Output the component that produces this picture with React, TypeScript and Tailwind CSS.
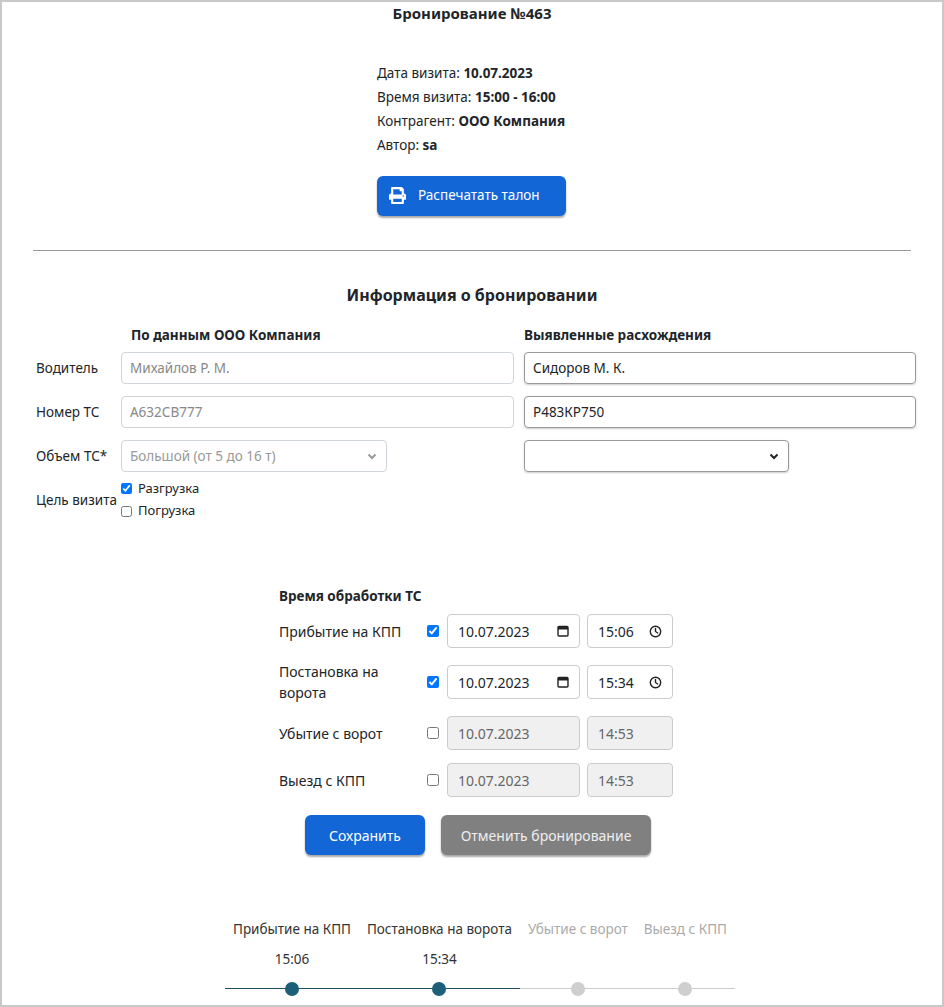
import React from 'react';
import { FaPrint } from 'react-icons/fa';

const CalIcon = () => (
  <svg width="12" height="12" viewBox="0 0 12 12" className="text-[#222]">
    <rect x="1" y="1.5" width="10" height="9.5" rx="1" fill="none" stroke="currentColor" strokeWidth="1.4" />
    <rect x="1" y="1.5" width="10" height="3" fill="currentColor" />
  </svg>
);

const ClockIcon = () => (
  <svg width="13" height="13" viewBox="0 0 14 14" className="text-[#222]">
    <circle cx="7" cy="7" r="5.6" fill="none" stroke="currentColor" strokeWidth="1.5" />
    <path d="M7 3.8V7l2.4 1.6" fill="none" stroke="currentColor" strokeWidth="1.5" strokeLinecap="round" />
  </svg>
);

const Chevron = ({ dim }: { dim?: boolean }) => (
  <svg width="12" height="12" viewBox="0 0 12 12" className={dim ? 'text-[#999]' : 'text-[#222]'}>
    <path d="M2.5 4.5L6 8l3.5-3.5" fill="none" stroke="currentColor" strokeWidth="2" />
  </svg>
);

const timing = [
  { label: 'Прибытие на КПП', on: true, time: '15:06' },
  { label: 'Постановка на ворота', on: true, time: '15:34' },
  { label: 'Убытие с ворот', on: false, time: '14:53' },
  { label: 'Выезд с КПП', on: false, time: '14:53' },
];

const steps = [
  { label: 'Прибытие на КПП', time: '15:06', done: true },
  { label: 'Постановка на ворота', time: '15:34', done: true },
  { label: 'Убытие с ворот', time: '', done: false },
  { label: 'Выезд с КПП', time: '', done: false },
];

const App: React.FC = () => {
  return (
    <div className="w-[944px] h-[1007px] overflow-hidden border-2 border-[#c8c8c8] bg-white text-[14px] text-[#212529] font-['Liberation_Sans',Arial,sans-serif]">
      <h2 className="text-center font-bold text-[15px] mt-0">Бронирование №463</h2>

      <div className="ml-[375px] mt-[39px] flex flex-col gap-[6px] leading-[18px] text-[13.5px]">
        <div>Дата визита: <b>10.07.2023</b></div>
        <div>Время визита: <b>15:00 - 16:00</b></div>
        <div>Контрагент: <b>ООО Компания</b></div>
        <div>Автор: <b>sa</b></div>
      </div>

      <button className="ml-[375px] mt-[22px] w-[189px] h-[40px] rounded-md bg-[#1366d6] text-white flex items-center gap-3 px-3 shadow-[0_2px_2px_rgba(0,0,0,0.35)] font-['Liberation_Sans',Arial,sans-serif]">
        <FaPrint className="text-[17px]" />
        <span className="text-[13.5px]">Распечатать талон</span>
      </button>

      <div className="mx-[31px] mt-[34px] border-t border-[#999]" />

      <h3 className="text-center font-bold text-[16px] mt-[32px]">Информация о бронировании</h3>

      <div className="mt-[18px] ml-[34px] mr-[26px] text-[13.5px]">
        <div className="flex">
          <div className="w-[85px]" />
          <div className="w-[403px] pl-[10px] font-bold">По данным ООО Компания</div>
          <div className="font-bold">Выявленные расхождения</div>
        </div>

        {[
          ['Водитель', 'Михайлов Р. М.', 'Сидоров М. К.'],
          ['Номер ТС', 'А632СВ777', 'Р483КР750'],
        ].map(([l, a, b], i) => (
          <div key={l} className={`flex items-center ${i === 0 ? 'mt-[7px]' : 'mt-[12px]'}`}>
            <div className="w-[85px]">{l}</div>
            <div className="w-[393px] h-[32px] border border-[#ced4da] rounded px-2 flex items-center text-[#888]">{a}</div>
            <div className="w-[10px]" />
            <div className="w-[392px] h-[32px] border border-[#999] rounded px-2 flex items-center shadow-[0_1px_2px_rgba(0,0,0,0.2)]">{b}</div>
          </div>
        ))}

        <div className="flex items-center mt-[12px]">
          <div className="w-[85px]">Объем ТС*</div>
          <div className="w-[266px] h-[32px] border border-[#ced4da] rounded px-2 flex items-center justify-between text-[#999]">
            Большой (от 5 до 16 т)
            <Chevron dim />
          </div>
          <div className="w-[137px]" />
          <div className="w-[265px] h-[32px] border border-[#999] rounded px-2 flex items-center justify-end shadow-[0_1px_2px_rgba(0,0,0,0.2)]">
            <Chevron />
          </div>
        </div>

        <div className="flex items-center mt-[7px]">
          <div className="w-[85px]">Цель визита</div>
          <div className="flex flex-col gap-[3px] text-[13px]">
            <label className="flex items-center gap-[6px]"><input type="checkbox" defaultChecked className="w-[11px] h-[11px] m-0" />Разгрузка</label>
            <label className="flex items-center gap-[6px]"><input type="checkbox" className="w-[11px] h-[11px] m-0" />Погрузка</label>
          </div>
        </div>
      </div>

      <div className="ml-[277px] mt-[65px] text-[14px]">
        <div className="font-bold text-[13.5px]">Время обработки ТС</div>
        <div className="mt-[8px] flex flex-col gap-[13px]">
          {timing.map((r) => (
            <div key={r.label} className="flex items-center">
              <div className="w-[148px]">{r.label}</div>
              <input type="checkbox" defaultChecked={r.on} className="w-[12px] h-[12px] m-0" />
              <div className={`ml-[8px] w-[133px] h-[34px] border border-[#ccc] rounded px-[10px] flex items-center justify-between ${r.on ? 'bg-white' : 'bg-[#f0f0f0] text-[#666]'}`}>
                <span>10.07.2023</span>
                {r.on && <CalIcon />}
              </div>
              <div className={`ml-[7px] w-[86px] h-[34px] border border-[#ccc] rounded px-[10px] flex items-center justify-between ${r.on ? 'bg-white' : 'bg-[#f0f0f0] text-[#666]'}`}>
                <span>{r.time}</span>
                {r.on && <ClockIcon />}
              </div>
            </div>
          ))}
        </div>
      </div>

      <div className="ml-[303px] mt-[18px] flex gap-[16px] text-[14px]">
        <button className="w-[120px] h-[40px] rounded-md bg-[#1366d6] text-white shadow-[0_2px_2px_rgba(0,0,0,0.35)] font-['Liberation_Sans',Arial,sans-serif]">Сохранить</button>
        <button className="w-[210px] h-[40px] rounded-md bg-[#808080] text-[#eee] shadow-[0_2px_2px_rgba(0,0,0,0.35)] font-['Liberation_Sans',Arial,sans-serif]">Отменить бронирование</button>
      </div>

      <div className="ml-[223px] mt-[64px] flex text-[13.5px]">
        {steps.map((s) => (
          <div key={s.label} className="flex flex-col items-center">
            <div className={`px-2 whitespace-nowrap ${s.done ? 'text-[#333]' : 'text-[#aaa]'}`}>{s.label}</div>
            <div className="h-[18px] mt-[10px] text-[#333]">{s.time}</div>
            <div className="relative w-full h-[14px] mt-[15px] flex items-center justify-center">
              <div className={`absolute left-0 right-0 top-[6px] h-px ${s.done ? 'bg-[#1e4f62]' : 'bg-[#ccc]'}`} />
              <div className={`relative w-[14px] h-[14px] rounded-full ${s.done ? 'bg-[#1d5f78]' : 'bg-[#cfcfcf]'}`} />
            </div>
          </div>
        ))}
      </div>
    </div>
  );
};

export default App;
